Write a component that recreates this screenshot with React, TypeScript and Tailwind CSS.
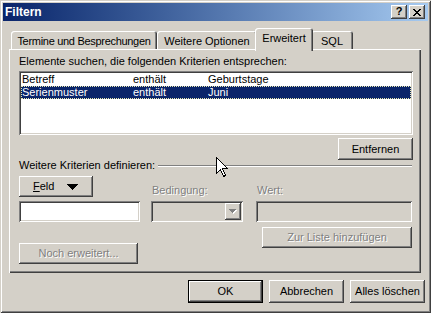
import React from "react";

const raised =
  "bg-[#d4d0c8] shadow-[inset_-1px_-1px_#404040,inset_1px_1px_#ffffff,inset_-2px_-2px_#808080,inset_2px_2px_#d4d0c8]";
const sunken =
  "shadow-[inset_1px_1px_#808080,inset_-1px_-1px_#ffffff,inset_2px_2px_#404040,inset_-2px_-2px_#d4d0c8]";
const disabledText = "text-[#808080] [text-shadow:1px_1px_0_#ffffff]";

function Tab({ label, width, selected, tight }: { label: string; width: string; selected?: boolean; tight?: boolean }) {
  if (selected) {
    return (
      <div
        className={`relative z-10 mx-[-2px] mb-[-2px] h-[23px] ${width} rounded-t-[3px] bg-[#d4d0c8] pt-[4px] text-center leading-[13px] shadow-[inset_1px_1px_#ffffff,inset_-1px_0_#404040,inset_-2px_0_#808080]`}
      >
        {label}
      </div>
    );
  }
  return (
    <div
      className={`h-[18px] ${width} whitespace-nowrap rounded-t-[3px] bg-[#d4d0c8] pt-[4px] text-center leading-[13px] shadow-[inset_1px_1px_#ffffff,inset_-1px_0_#404040,inset_-2px_0_#808080] ${tight ? "tracking-[-0.3px]" : ""}`}
    >
      {label}
    </div>
  );
}

function Cursor() {
  return (
    <svg
      className="absolute left-[216px] top-[157px] z-20"
      width="13"
      height="21"
      viewBox="0 0 13 21"
    >
      <path
        d="M0.5 0.5 L0.5 16.5 L4.5 12.5 L7.5 19.5 L9.5 18.5 L6.5 11.5 L11.5 11.5 Z"
        fill="#ffffff"
        stroke="#000000"
        strokeWidth="1"
        shapeRendering="crispEdges"
      />
    </svg>
  );
}

export default function App() {
  return (
    <div
      className="relative h-[313px] w-[431px] bg-[#d4d0c8] p-[3px] text-[11px] text-black shadow-[inset_1px_1px_#d4d0c8,inset_-1px_-1px_#404040,inset_2px_2px_#ffffff,inset_-2px_-2px_#808080]"
      style={{ fontFamily: '"Liberation Sans", Arial, sans-serif' }}
    >
      {/* Title bar */}
      <div className="flex h-[18px] items-center bg-gradient-to-r from-[#0a246a] to-[#a6caf0] pl-[2px] pr-[3px]">
        <span className="flex-1 text-[12px] font-bold leading-[14px] text-white">Filtern</span>
        <div className="flex gap-[2px]">
          <div className={`${raised} flex h-[14px] w-[16px] items-center justify-center pb-[1px] text-[11px] font-bold leading-[11px]`}>
            ?
          </div>
          <div className={`${raised} flex h-[14px] w-[16px] items-center justify-center`}>
            <svg width="8" height="7" viewBox="0 0 8 7" shapeRendering="crispEdges">
              <path d="M0 0h2v1h-2zM6 0h2v1h-2zM1 1h2v1h-2zM5 1h2v1h-2zM2 2h4v1h-4zM3 3h2v1h-2zM2 4h4v1h-4zM1 5h2v1h-2zM5 5h2v1h-2zM0 6h2v1h-2zM6 6h2v1h-2z" fill="#000" />
            </svg>
          </div>
        </div>
      </div>

      {/* Tabs */}
      <div className="ml-[8px] mt-[7px] flex h-[21px] items-end">
        <Tab label="Termine und Besprechungen" width="w-[146px]" tight />
        <Tab label="Weitere Optionen" width="w-[100px]" />
        <Tab label="Erweitert" width="w-[58px]" selected />
        <Tab label="SQL" width="w-[42px]" />
      </div>

      {/* Tab panel */}
      <div className="ml-[6px] mr-[4px] flex h-[224px] w-[412px] flex-col pl-[10px] pr-[8px] pt-[6px] shadow-[inset_1px_1px_#ffffff,inset_-1px_-1px_#404040,inset_-2px_-2px_#808080]">
        <div className="leading-[13px]">Elemente suchen, die folgenden Kriterien entsprechen:</div>

        {/* List */}
        <div className={`${sunken} mt-[3px] h-[64px] w-[394px] bg-white p-[2px]`}>
          <div className="flex h-[13px] items-center leading-[13px]">
            <span className="w-[112px] pl-[1px]">Betreff</span>
            <span className="w-[75px]">enthält</span>
            <span>Geburtstage</span>
          </div>
          <div className="flex h-[13px] items-center bg-[#0a246a] leading-[13px] text-white outline-1 -outline-offset-1 outline-dotted outline-[#e8e8b0]">
            <span className="w-[112px] pl-[1px]">Serienmuster</span>
            <span className="w-[75px]">enthält</span>
            <span>Juni</span>
          </div>
        </div>

        <div className={`${raised} mt-[3px] flex h-[22px] w-[75px] items-center justify-center self-end`}>
          Entfernen
        </div>

        {/* Weitere Kriterien */}
        <div className="mt-[-1px] flex h-[13px] items-center leading-[13px]">
          <span>Weitere Kriterien definieren:</span>
          <div className="ml-[3px] mr-[1px] h-[2px] flex-1 border-b border-t border-b-white border-t-[#808080]" />
        </div>

        {/* Row 1: Feld button and labels */}
        <div className="mt-[4px] flex items-end">
          <div className="w-[121px]">
            <div className={`${raised} flex h-[21px] w-[74px] items-center pl-[14px]`}>
              <span className="w-[34px]">
                <span className="underline">F</span>eld
              </span>
              <svg width="11" height="6" viewBox="0 0 11 6" shapeRendering="crispEdges">
                <path d="M0 0h11l-5.5 6z" fill="#000" />
              </svg>
            </div>
          </div>
          <div className={`ml-[11px] w-[92px] pl-[1px] leading-[13px] ${disabledText}`}>Bedingung:</div>
          <div className={`ml-[13px] w-[156px] pl-[1px] leading-[13px] ${disabledText}`}>Wert:</div>
        </div>

        {/* Row 2: inputs */}
        <div className="mt-[4px] flex">
          <div className={`${sunken} h-[21px] w-[121px] bg-white`} />
          <div className={`${sunken} ml-[11px] flex h-[21px] w-[92px] justify-end bg-[#d4d0c8] p-[2px]`}>
            <div className={`${raised} flex h-[17px] w-[16px] items-center justify-center`}>
              <svg width="8" height="5" viewBox="0 0 8 5" shapeRendering="crispEdges">
                <path d="M1 1h7l-3.5 4z" fill="#ffffff" />
                <path d="M0 0h7l-3.5 4z" fill="#808080" />
              </svg>
            </div>
          </div>
          <div className={`${sunken} ml-[13px] h-[21px] w-[156px] bg-[#d4d0c8]`} />
        </div>

        {/* Row 3: buttons */}
        <div className="flex items-start">
          <div className={`${raised} mt-[21px] flex h-[21px] w-[119px] items-center justify-center ${disabledText}`}>
            Noch erweitert...
          </div>
          <div className={`${raised} ml-auto mr-[1px] mt-[5px] flex h-[21px] w-[150px] items-center justify-center ${disabledText}`}>
            Zur Liste hinzufügen
          </div>
        </div>
      </div>

      {/* Bottom buttons */}
      <div className="mr-[3px] mt-[7px] flex justify-end gap-[6px]">
        <div className="h-[23px] w-[75px] border border-black">
          <div className={`${raised} flex h-full w-full items-center justify-center`}>OK</div>
        </div>
        <div className={`${raised} flex h-[23px] w-[75px] items-center justify-center`}>Abbrechen</div>
        <div className={`${raised} flex h-[23px] w-[75px] items-center justify-center`}>Alles löschen</div>
      </div>

      <Cursor />
    </div>
  );
}
